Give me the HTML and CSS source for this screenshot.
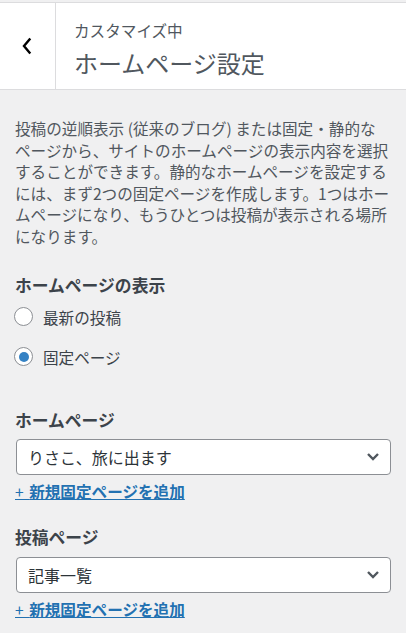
FILE: index.html
```
<!DOCTYPE html>
<html lang="ja">
<head>
    <meta charset="UTF-8">
    <meta name="viewport" content="width=device-width, initial-scale=1.0">
    <title>ホームページ設定</title>
    <link rel="stylesheet" href="styles.css">
</head>
<body>

    <div class="section-header">
        <div class="back-button">
            <svg width="12" height="18" viewBox="0 0 12 18">
                <path d="M8.5 2.5 L3 9 L8.5 15.5" fill="none" stroke="#000" stroke-width="2.4" stroke-linecap="square"/>
            </svg>
        </div>
        <div class="section-title">
            <div class="title-sub">カスタマイズ中</div>
            <h3 class="title-main">ホームページ設定</h3>
        </div>
    </div>

    <div class="section-body">
        <p class="description">
            投稿の逆順表示 (従来のブログ) または固定・静的な<br>ページから、サイトのホームページの表示内容を選択<br>することができます。静的なホームページを設定する<br>には、まず2つの固定ページを作成します。1つはホー<br>ムページになり、もうひとつは投稿が表示される場所<br>になります。
        </p>

        <div class="control">
            <div class="control-title">ホームページの表示</div>
            <label class="radio-row">
                <span class="radio"></span>
                最新の投稿
            </label>
            <label class="radio-row">
                <span class="radio radio--checked"></span>
                固定ページ
            </label>
        </div>

        <div class="control control--page">
            <div class="control-title">ホームページ</div>
            <div class="select-box">
                <span>りさこ、旅に出ます</span>
                <svg width="14" height="9" viewBox="0 0 14 9">
                    <path d="M2 2 L7 7 L12 2" fill="none" stroke="#50575e" stroke-width="2.4"/>
                </svg>
            </div>
            <a href="#" class="add-new"><span class="plus">+&nbsp;</span>新規固定ページを追加</a>
        </div>

        <div class="control control--page control--posts">
            <div class="control-title">投稿ページ</div>
            <div class="select-box">
                <span>記事一覧</span>
                <svg width="14" height="9" viewBox="0 0 14 9">
                    <path d="M2 2 L7 7 L12 2" fill="none" stroke="#50575e" stroke-width="2.4"/>
                </svg>
            </div>
            <a href="#" class="add-new"><span class="plus">+&nbsp;</span>新規固定ページを追加</a>
        </div>
    </div>

</body>
</html>
```

FILE: styles.css
```
body {
    margin: 0;
    padding-top: 2px;
    background-color: #f0f0f1;
    font-family: "Noto Sans CJK JP", "Noto Sans", sans-serif;
    color: #50575e;
}

.section-header {
    display: flex;
    height: 86px;
    background-color: #fff;
    border-top: 1px solid #dcdcde;
    border-bottom: 1px solid #dcdcde;
}

.back-button {
    width: 56px;
    padding-right: 2px;
    box-sizing: border-box;
    display: flex;
    align-items: center;
    justify-content: center;
    border-right: 1px solid #dcdcde;
}

.section-title {
    padding: 17px 0 0 18px;
}

.title-sub {
    font-size: 15.6px;
    line-height: 20px;
    color: #50575e;
}

.title-main {
    margin: 7px 0 0;
    font-size: 24px;
    line-height: 32px;
    font-weight: normal;
    color: #50575e;
}

.section-body {
    padding: 0 15px 0 15px;
}

.description {
    margin: 28px 0 0;
    font-size: 15.6px;
    line-height: 21.6px;
    color: #50575e;
    white-space: nowrap;
}

.control {
    display: flex;
    flex-direction: column;
}

.control-title {
    margin-top: 26px;
    font-size: 16.8px;
    line-height: 22px;
    font-weight: bold;
    color: #3c434a;
}

.radio-row {
    display: flex;
    align-items: center;
    gap: 10px;
    height: 24px;
    margin-top: 16px;
    font-size: 15.6px;
    color: #3c434a;
}

.radio-row:first-of-type {
    margin-top: 9px;
}

.radio {
    box-sizing: border-box;
    width: 19px;
    height: 19px;
    margin-left: -1px;
    border: 1.2px solid #8c8f94;
    border-radius: 50%;
    background-color: #fff;
    display: flex;
    align-items: center;
    justify-content: center;
}

.radio--checked::before {
    content: "";
    width: 10px;
    height: 10px;
    border-radius: 50%;
    background-color: #3582c4;
}

.control--page .control-title {
    margin-top: 40px;
}

.control--posts .control-title {
    margin-top: 25px;
}

.select-box {
    box-sizing: border-box;
    height: 36px;
    margin: 8px 0 0 1px;
    padding: 0 10px 0 11px;
    display: flex;
    align-items: center;
    justify-content: space-between;
    background-color: #fff;
    border: 1px solid #8c8f94;
    border-radius: 4px;
    font-size: 16px;
    color: #2c3338;
}

.control--posts .select-box {
    margin-top: 9px;
}

.add-new {
    align-self: flex-start;
    margin-top: 6px;
    font-size: 15.6px;
    line-height: 20px;
    font-weight: bold;
    color: #2271b1;
}

.plus {
    font-weight: normal;
    letter-spacing: 1px;
}
```
